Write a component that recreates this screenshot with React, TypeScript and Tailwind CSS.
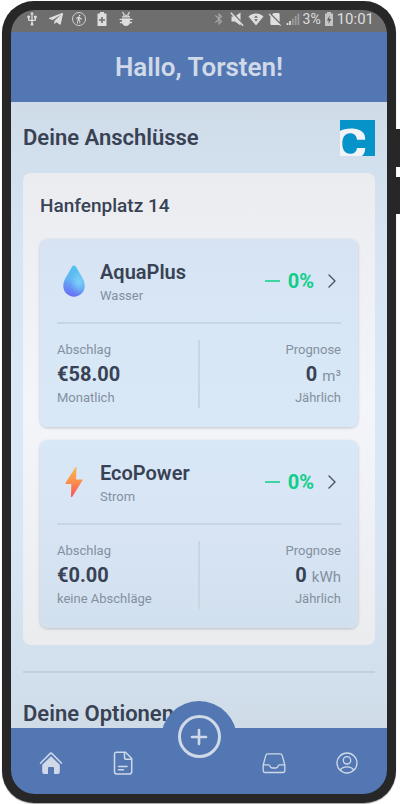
import React from "react";
import { MdBluetooth, MdDirectionsWalk, MdSignalCellularNoSim, MdUsb } from "react-icons/md";
import { FaTelegramPlane } from "react-icons/fa";

type Connection = {
  name: string;
  kind: string;
  icon: React.ReactNode;
  payment: string;
  interval: string;
  forecast: string;
  unit: string;
  surface: string;
};

function DropIcon() {
  return (
    <svg viewBox="0 0 22 32" className="h-8 w-[22px]" aria-hidden="true">
      <defs>
        <linearGradient id="drop-body" x1="0.65" y1="0" x2="0.4" y2="1">
          <stop offset="0" stopColor="#4fc3ee" />
          <stop offset="0.5" stopColor="#63b4f3" />
          <stop offset="1" stopColor="#6a6cf5" />
        </linearGradient>
        <radialGradient id="drop-light" cx="0.72" cy="0.52" r="0.4">
          <stop offset="0" stopColor="#7fd3fa" stopOpacity="0.9" />
          <stop offset="1" stopColor="#7fd3fa" stopOpacity="0" />
        </radialGradient>
      </defs>
      <path d="M11 0.5C12.6 0.5 13.2 2 14 3.6C16.5 9 21.7 14.5 21.7 21A10.7 10.7 0 0 1 0.3 21C0.3 14.5 5.5 9 8 3.6C8.8 2 9.4 0.5 11 0.5Z" fill="url(#drop-body)" />
      <path d="M11 0.5C12.6 0.5 13.2 2 14 3.6C16.5 9 21.7 14.5 21.7 21A10.7 10.7 0 0 1 0.3 21C0.3 14.5 5.5 9 8 3.6C8.8 2 9.4 0.5 11 0.5Z" fill="url(#drop-light)" />
    </svg>
  );
}

function BoltIcon() {
  return (
    <svg viewBox="0 0 18 32" className="h-8 w-[18px]" aria-hidden="true">
      <defs>
        <linearGradient id="bolt-body" x1="0" y1="0" x2="0" y2="1">
          <stop offset="0" stopColor="#f8b84e" />
          <stop offset="0.5" stopColor="#fb8f4c" />
          <stop offset="1" stopColor="#fb4f5c" />
        </linearGradient>
      </defs>
      <path d="M10.5 1.2Q11.5 0.5 11.5 1.6L11 13.5H17Q18 13.6 17.4 14.6L7.4 30.4Q6.4 31.5 6 30.4L6.3 18H1Q0 17.8 0.6 16.8Z" fill="url(#bolt-body)" />
    </svg>
  );
}

const connections: Connection[] = [
  {
    name: "AquaPlus",
    kind: "Wasser",
    icon: <DropIcon />,
    payment: "€58.00",
    interval: "Monatlich",
    forecast: "0",
    unit: "m³",
    surface: "bg-linear-to-b from-[#d7e3f2] via-[#d8e7f6] to-[#d8e8f7]",
  },
  {
    name: "EcoPower",
    kind: "Strom",
    icon: <BoltIcon />,
    payment: "€0.00",
    interval: "keine Abschläge",
    forecast: "0",
    unit: "kWh",
    surface: "bg-linear-to-b from-[#d8e8f7] via-[#d8e4f4] to-[#d1e0ee]",
  },
];

function StatusBar() {
  return (
    <div className="flex h-[22px] shrink-0 items-center justify-between bg-[#6e6e6e] pr-[13px] pb-1 pl-[13px] text-[#dedede]">
      <div className="flex items-center gap-2">
        <MdUsb className="size-4" />
        <FaTelegramPlane className="size-4" />
        <span className="flex size-[14px] items-center justify-center rounded-full border border-[#d0d0d0]">
          <MdDirectionsWalk className="size-[10px]" />
        </span>
        <svg viewBox="0 0 16 16" className="size-4" aria-hidden="true">
          <path d="M6 1h4v1.5h2.500V15h-9V2.500H6Z" fill="currentColor" />
          <path d="M8 6v6M5 9h6" stroke="#6e6e6e" strokeWidth="1.6" />
        </svg>
        <svg viewBox="0 0 16 16" className="size-4" aria-hidden="true">
          <path d="M4 6.500C4 2.800 12 2.800 12 6.500ZM4 7.500H12V10.500C12 13.500 10 15 8 15S4 13.500 4 10.500Z" fill="currentColor" />
          <path d="M4.800 1.500L6.300 4M11.200 1.500L9.700 4M2 8.300H14M2.500 11.500H13.500" stroke="currentColor" strokeWidth="1.3" strokeLinecap="round" />
          <path d="M6.300 4.900h0.900M8.800 4.900h0.900" stroke="#6e6e6e" strokeWidth="0.9" />
        </svg>
      </div>
      <div className="flex items-center gap-[3px]">
        <MdBluetooth className="size-[14px] text-[#a6a6a6]" />
        <svg viewBox="0 0 16 16" className="size-4" aria-hidden="true">
          <path d="M2.500 5.500H6L11.500 1.500V14.500L6 10.500H2.500Z" fill="currentColor" />
          <path d="M2.800 1L15.300 14.200" stroke="#6e6e6e" strokeWidth="1.4" />
          <path d="M1.800 1.800L14.200 14.800" stroke="currentColor" strokeWidth="1.4" />
        </svg>
        <svg viewBox="0 0 16 16" className="size-4" aria-hidden="true">
          <path d="M0.500 5.500C4.500 1.500 11.500 1.500 15.500 5.500L8 14.500Z" fill="currentColor" />
          <path d="M8 4.500l2 2.300H6ZM8 10.500l2-2.300H6Z" fill="#6e6e6e" />
        </svg>
        <MdSignalCellularNoSim className="size-4" />
        <svg viewBox="0 0 14 14" className="size-[14px]" aria-hidden="true">
          <path d="M1.500 11v2M4 9v4" stroke="currentColor" strokeWidth="1.8" />
          <path d="M6.800 6.500V13M9.600 4v9M12.400 1.500V13" stroke="#9b9b9b" strokeWidth="1.8" />
        </svg>
        <span className="text-sm leading-4">3%</span>
        <svg viewBox="0 0 10 16" className="h-4 w-[10px]" aria-hidden="true">
          <path d="M3 1h4v1.5h2V15H1V2.500h2Z" fill="#c4c4c4" />
          <path d="M5.800 4.500L2.800 9.500H4.800L4.300 13L7.300 8H5.200Z" fill="#5c5c5c" />
        </svg>
        <span className="text-[15px] leading-4">10:01</span>
      </div>
    </div>
  );
}

function ProviderLogo() {
  return (
    <svg viewBox="0 0 35 36" className="h-9 w-[35px]" role="img" aria-label="Logo">
      <path d="M0 0H35V36H0Z" fill="#0693ca" />
      <path
        d="M0 11C4 8 18 6.500 23 12.500C24.800 14.500 25.200 17 25.200 19.700H17C16.500 16 14.500 13.300 10 13.300C5 13.300 2.300 17.500 2.300 23.500C2.300 29.500 5 33.800 10 33.800C14.500 33.800 16.500 31.500 17 28H25.200C25.200 31.500 24.200 34 22 36H0Z"
        fill="#f1f3f6"
      />
    </svg>
  );
}

function ConnectionCard({ item }: { item: Connection }) {
  return (
    <article className={`rounded-lg px-[17px] pt-5 pb-[17px] shadow-[0_1px_3px_rgba(60,70,90,0.28)] ${item.surface}`}>
      <div className="flex h-[65px] items-start border-b-2 border-[#c8d6e4]">
        <div className="flex h-11 w-[34px] items-center justify-center">{item.icon}</div>
        <div className="flex-1 pl-[9px]">
          <h4 className="text-xl leading-[26px] font-semibold text-[#384254]">{item.name}</h4>
          <p className="text-[13px] leading-[22px] text-[#8490a0]">{item.kind}</p>
        </div>
        <button type="button" aria-label={`${item.name} öffnen`} className="flex h-11 items-center">
          <span className="h-[2px] w-[15px] bg-[#3dd5a0]" />
          <span className="pl-2 text-xl font-bold text-[#0fce8a]">0%</span>
          <svg viewBox="0 0 8 14" className="mr-[5px] ml-[14px] h-[14px] w-2" aria-hidden="true">
            <path d="M1 1L7 7L1 13" fill="none" stroke="#4a5463" strokeWidth="1.4" strokeLinecap="round" strokeLinejoin="round" />
          </svg>
        </button>
      </div>
      <div className="mt-[14px] flex items-stretch justify-between text-[13px] leading-6 text-[#8490a0]">
        <div className="flex-1">
          <p>Abschlag</p>
          <p className="text-xl leading-6 font-bold text-[#384254]">{item.payment}</p>
          <p>{item.interval}</p>
        </div>
        <div className="my-[2px] w-[2px] bg-[#c8d6e4]" />
        <div className="flex-1 text-right">
          <p>Prognose</p>
          <p className="flex h-6 items-baseline justify-end gap-[5px] text-[15px] leading-6">
            <span className="text-xl leading-6 font-bold text-[#384254]">{item.forecast}</span>
            <span>{item.unit}</span>
          </p>
          <p>Jährlich</p>
        </div>
      </div>
    </article>
  );
}

function BottomNav() {
  return (
    <nav className="relative flex h-[66px] shrink-0 items-center justify-between bg-[#5377b3] px-7 pt-1 text-[#d0d9e8]">
      <div className="absolute -top-[27px] left-1/2 flex size-[76px] -translate-x-1/2 justify-center rounded-full bg-[#5377b3] pt-[14px]">
        <button type="button" aria-label="Hinzufügen" className="flex size-[43px] items-center justify-center rounded-full border-[3px] border-[#d0d9e8]">
          <svg viewBox="0 0 18 18" className="size-[18px]" aria-hidden="true">
            <path d="M9 2V16M2 9H16" stroke="currentColor" strokeWidth="2.6" strokeLinecap="round" />
          </svg>
        </button>
      </div>
      <div className="flex gap-12">
        <a href="#start" aria-label="Start">
          <svg viewBox="0 0 24 24" className="size-6" aria-hidden="true">
            <path d="M1.500 12.200L11 2.600Q12 1.700 13 2.600L22.500 12.200" fill="none" stroke="currentColor" strokeWidth="1.5" strokeLinecap="round" />
            <path d="M12 5.200L20.800 13.800V21Q20.800 23 18.800 23H15V17Q15 16 14 16H10Q9 16 9 17V23H5.200Q3.200 23 3.200 21V13.800Z" fill="currentColor" />
          </svg>
        </a>
        <a href="#dokumente" aria-label="Dokumente">
          <svg viewBox="0 0 24 24" className="size-6" fill="none" stroke="currentColor" strokeWidth="1.5" strokeLinecap="round" strokeLinejoin="round" aria-hidden="true">
            <path d="M5.500 1.200H14.500L20.700 7.500V20.800Q20.700 23 18.500 23H5.500Q3.500 23 3.500 20.800V3.400Q3.500 1.200 5.500 1.200Z" />
            <path d="M13.500 1.500V6.500Q13.500 8.300 15.300 8.300H20.500" />
            <path d="M7.500 15.500H16M7.500 18.800H12.500" />
          </svg>
        </a>
      </div>
      <div className="flex gap-[49px]">
        <a href="#postfach" aria-label="Postfach">
          <svg viewBox="0 0 24 24" className="size-6" fill="none" stroke="currentColor" strokeWidth="1.3" strokeLinejoin="round" aria-hidden="true">
            <path d="M6 2.800H18Q19.800 2.800 20.200 4.400L22.800 14V19.500Q22.800 21.500 20.800 21.500H3.200Q1.200 21.500 1.200 19.500V14L3.800 4.400Q4.200 2.800 6 2.800Z" />
            <path d="M1.200 13.800H6.500Q7.500 13.800 8 15.300Q8.600 17 10 17H14Q15.400 17 16 15.300Q16.500 13.800 17.500 13.800H22.800" />
          </svg>
        </a>
        <a href="#profil" aria-label="Profil">
          <svg viewBox="0 0 24 24" className="size-6" fill="none" stroke="currentColor" strokeWidth="1.3" aria-hidden="true">
            <circle cx="12" cy="12" r="10" />
            <circle cx="12" cy="9.3" r="3.7" />
            <path d="M5.300 19.200C6.500 16.700 9 15.800 12 15.800S17.500 16.700 18.700 19.200" />
          </svg>
        </a>
      </div>
    </nav>
  );
}

export default function App() {
  return (
    <div className="flex h-screen bg-white pt-px pr-1 pb-px pl-0.5 font-[Roboto,sans-serif]">
      <div className="relative flex min-w-0 flex-1 rounded-[32px] bg-[#272727] p-[9px] shadow-[0_1px_1px_rgba(0,0,0,0.35)]">
        <span className="absolute top-32 -right-1 h-[38px] w-1 bg-[#272727]" />
        <span className="absolute top-44 -right-1 h-[37px] w-1 bg-[#272727]" />
        <div className="flex min-w-0 flex-1 flex-col overflow-hidden rounded-3xl">
          <StatusBar />
          <header className="flex h-[70px] shrink-0 items-center justify-center bg-[#5377b3]">
            <h1 className="text-[26px] leading-8 font-semibold text-[#d0d9e8]">Hallo, Torsten!</h1>
          </header>
          <main className="min-h-0 flex-1 overflow-hidden bg-[linear-gradient(#cfdce8,#d7e4f3_24%,#d8e8f7_42%,#d8e8f7_58%,#d7e4f3_76%,#cfdce8)] px-3 pt-[18px]">
            <div className="flex items-center justify-between">
              <h2 className="text-[22px] leading-7 font-semibold text-[#384254]">Deine Anschlüsse</h2>
              <ProviderLogo />
            </div>
            <section className="mt-[17px] rounded-lg bg-linear-to-b from-[#ebecf0] via-[#f4f5fa] to-[#ebecee] px-[17px] pt-[17px] pb-[17px]">
              <h3 className="text-[19px] leading-8 font-medium text-[#384254]">Hanfenplatz 14</h3>
              <div className="mt-[17px] flex flex-col gap-[13px]">
                {connections.map((item) => (
                  <ConnectionCard key={item.name} item={item} />
                ))}
              </div>
            </section>
            <hr className="mt-[26px] border-t-2 border-[#c2d0dd]" />
            <h2 className="mt-[27px] text-[22px] leading-7 font-semibold text-[#384254]">Deine Optionen</h2>
          </main>
          <BottomNav />
        </div>
      </div>
    </div>
  );
}
